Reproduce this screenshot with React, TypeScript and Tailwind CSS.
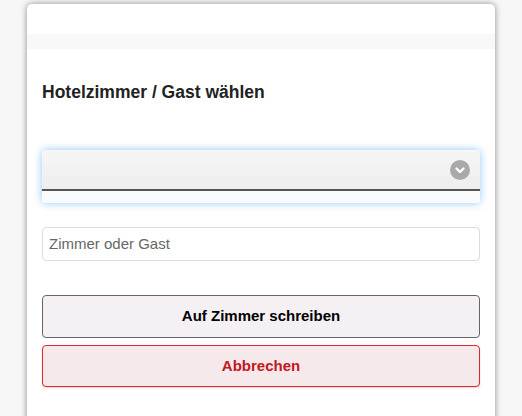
import React from "react";

export default function App() {
  return (
    <div
      className="h-[416px] w-[522px] overflow-hidden bg-[#f7f7f7] pt-[4px] pl-[27px]"
      style={{ fontFamily: '"Liberation Sans", Arial, sans-serif' }}
    >
      <div className="h-[440px] w-[468px] rounded-[5px] bg-white shadow-[0_0_6px_rgba(0,0,0,0.45)]">
        <div className="h-[30px]" />
        <div className="h-[15px] bg-[#f8f8f8]" />
        <div className="flex flex-col px-[15px]">
          <h2 className="mt-[32px] text-[17.5px] font-bold leading-[22px] text-[#222]">
            Hotelzimmer / Gast wählen
          </h2>
          <div className="mt-[47px] rounded-[4px] shadow-[0_0_8px_rgba(56,152,236,0.55)]">
            <div className="relative flex h-[41px] items-center rounded-t-[4px] border-b-2 border-[#555] bg-gradient-to-b from-[#f6f6f6] to-[#eeeeee]">
              <span className="absolute right-[10px] top-[10px] flex h-[20px] w-[20px] items-center justify-center rounded-full bg-[#a9a9a9]">
                <svg width="12" height="12" viewBox="0 0 12 12">
                  <path d="M2.5 4.5 L6 8 L9.5 4.5" fill="none" stroke="white" strokeWidth="2.4" strokeLinecap="round" strokeLinejoin="round" />
                </svg>
              </span>
            </div>
            <div className="h-[12px] rounded-b-[3px] bg-[#fafbfd]" />
          </div>
          <div className="mt-[24px] flex h-[34px] items-center rounded-[4px] border border-[#dcdcdc] px-[6px] text-[15px] text-[#666]">
            Zimmer oder Gast
          </div>
          <button className="mt-[34px] flex h-[43px] items-center justify-center rounded-[4px] border border-[#666] bg-[#f5f0f4] text-[15px] font-bold text-black">
            Auf Zimmer schreiben
          </button>
          <button className="mt-[7px] flex h-[42px] items-center justify-center rounded-[4px] border border-[#e0262e] bg-[#f5e9eb] text-[15px] font-bold text-[#c4161c] shadow-[0_1px_2px_rgba(0,0,0,0.15)]">
            Abbrechen
          </button>
        </div>
      </div>
    </div>
  );
}
